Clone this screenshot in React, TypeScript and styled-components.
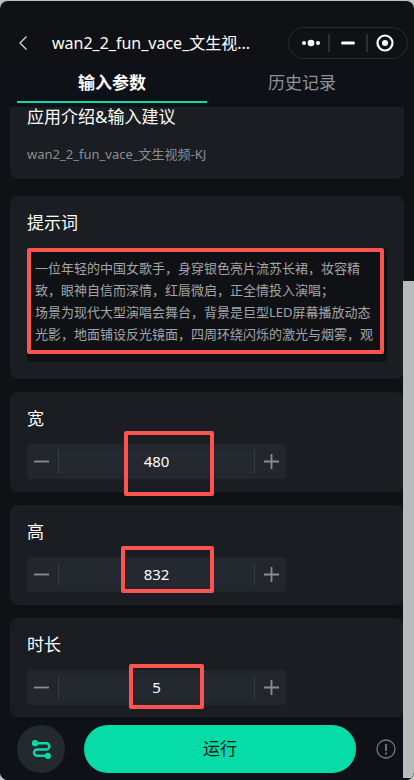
import React, { useState } from "react";
import styled, { createGlobalStyle } from "styled-components";

const GlobalStyle = createGlobalStyle`
  *, *::before, *::after { box-sizing: border-box; }
  body {
    margin: 0;
    background: #bfc3c1;
    font-family: "Noto Sans", "Noto Sans CJK SC", sans-serif;
    color: #ffffff;
  }
  button, input, textarea { font: inherit; color: inherit; }
  button { padding: 0; border: 0; background: none; cursor: pointer; }
  h1, h2, p { margin: 0; font-weight: 400; }
`;

const Frame = styled.div`
  position: relative;
  display: flex;
  flex-direction: column;
  height: 100vh;
  border-top: 1px solid #bfc3c1;
  border-radius: 8px;
  overflow: hidden;
  background: #101114;
`;

const TitleBar = styled.header`
  display: flex;
  align-items: center;
  height: 64px;
  padding: 20px 6px 0 17px;
  flex-shrink: 0;
`;

const BackButton = styled.button`
  display: flex;
  width: 35px;
  color: #d6d7d9;
`;

const Title = styled.h1`
  flex: 1;
  font-size: 16px;
  line-height: 24px;
  white-space: nowrap;
`;

const Capsule = styled.div`
  display: flex;
  align-items: center;
  width: 120px;
  height: 32px;
  padding: 0 4px;
  border: 1px solid #2b2c2f;
  border-radius: 16px;
`;

const CapsuleButton = styled.button`
  display: flex;
  flex: 1;
  align-items: center;
  justify-content: center;
  height: 18px;
  & + & { border-left: 2px solid #2d2e31; }
`;

const Tabs = styled.nav`
  display: flex;
  flex-shrink: 0;
  height: 42px;
  padding: 0 17px 4px;
  background: #0f1119;
`;

const Tab = styled.button<{ $active: boolean }>`
  flex: 1;
  font-size: 17px;
  line-height: 24px;
  font-weight: ${(p) => (p.$active ? 700 : 400)};
  color: ${(p) => (p.$active ? "#ffffff" : "#8f9398")};
  border-bottom: 2px solid ${(p) => (p.$active ? "#05dca8" : "transparent")};
`;

const Content = styled.main`
  flex: 1;
  min-height: 0;
  padding: 0 10px;
  overflow-y: auto;
  scrollbar-width: none;
`;

const Card = styled.section`
  margin-bottom: 13px;
  padding: 15px 17px 13px;
  border-radius: 8px;
  background: #1a1d21;
`;

const IntroCard = styled(Card)`
  margin-bottom: 17px;
  padding: 0 17px 14px;
  border-radius: 0 0 8px 8px;
`;

const PromptCard = styled(Card)`
  padding-bottom: 17px;
`;

const Heading = styled.h2`
  margin-bottom: 13px;
  font-size: 17px;
  line-height: 24px;
`;

const IntroHeading = styled(Heading)`
  margin-bottom: 16px;
  line-height: 20px;
`;

const Description = styled.p`
  font-size: 13px;
  line-height: 22px;
  color: #8c8e91;
`;

const PromptField = styled.div`
  position: relative;
  display: flex;
`;

const PromptInput = styled.textarea`
  width: 100%;
  height: 114px;
  padding: 9px 8px;
  border: 0;
  border-radius: 4px;
  outline: 0;
  resize: none;
  overflow: hidden;
  background: #101114;
  color: #a3a5a8;
  font-size: 13px;
  line-height: 22px;
`;

const StepperBox = styled.div`
  position: relative;
  display: flex;
  align-items: center;
  width: 259px;
  max-width: 100%;
  height: 35px;
  border-radius: 4px;
  background: #23272c;
`;

const StepButton = styled.button<{ $side: "left" | "right" }>`
  display: flex;
  align-items: center;
  justify-content: center;
  width: 31px;
  height: 35px;
  padding: ${(p) => (p.$side === "left" ? "0 2px 0 0" : "0 0 0 2px")};
  color: #8b8d91;
`;

const StepInput = styled.input`
  flex: 1;
  min-width: 0;
  height: 23px;
  padding: 0 0 2px;
  border: solid #3a3d43;
  border-width: 0 1px;
  outline: 0;
  background: #242830;
  text-align: center;
  font-size: 15px;
`;

const Highlight = styled.span<{ $top: number; $left: number; $width: number; $height: number }>`
  position: absolute;
  top: ${(p) => p.$top}px;
  left: ${(p) => p.$left}px;
  width: ${(p) => p.$width}px;
  height: ${(p) => p.$height}px;
  border: 4px solid #fd5451;
  border-radius: 2px;
  pointer-events: none;
`;

const PromptHighlight = styled.span`
  position: absolute;
  inset: 0 3px 8px 0;
  border: 4px solid #fd5451;
  border-radius: 2px;
  pointer-events: none;
`;

const Footer = styled.footer`
  display: flex;
  align-items: center;
  flex-shrink: 0;
  height: 63px;
  padding: 1px 18px 0 17px;
  background: #0f1119;
`;

const FlowButton = styled.button`
  display: flex;
  align-items: center;
  justify-content: center;
  width: 48px;
  height: 48px;
  border-radius: 50%;
  background: #232a2d;
`;

const RunButton = styled.button`
  flex: 1;
  height: 48px;
  margin: 0 20px 0 19px;
  padding-bottom: 3px;
  border-radius: 24px;
  background: #05dca8;
  color: #10191b;
  font-size: 17px;
`;

const InfoButton = styled.button`
  display: flex;
`;

const ScrollThumb = styled.div`
  position: absolute;
  top: 280px;
  right: 0;
  bottom: 2px;
  width: 11px;
  background: #b9babc;
`;

type Box = { top: number; left: number; width: number; height: number };

function Stepper({ id, label, initial, mark }: { id: string; label: string; initial: number; mark: Box }) {
  const [value, setValue] = useState(initial);
  return (
    <Card>
      <Heading><label htmlFor={id}>{label}</label></Heading>
      <StepperBox>
        <StepButton $side="left" aria-label={`${label} −`} onClick={() => setValue(value - 1)}>
          <svg width="15" height="15" viewBox="0 0 15 15" stroke="currentColor" strokeWidth="1.800"><path d="M0 7.500h15" /></svg>
        </StepButton>
        <StepInput id={id} inputMode="numeric" value={value} onChange={(e) => setValue(Number(e.target.value) || 0)} />
        <StepButton $side="right" aria-label={`${label} +`} onClick={() => setValue(value + 1)}>
          <svg width="15" height="15" viewBox="0 0 15 15" stroke="currentColor" strokeWidth="1.800"><path d="M0 7.500h15M7.500 0v15" /></svg>
        </StepButton>
        <Highlight $top={mark.top} $left={mark.left} $width={mark.width} $height={mark.height} />
      </StepperBox>
    </Card>
  );
}

const PROMPT =
  "一位年轻的中国女歌手，身穿银色亮片流苏长裙，妆容精致，眼神自信而深情，红唇微启，正全情投入演唱；\n场景为现代大型演唱会舞台，背景是巨型LED屏幕播放动态光影，地面铺设反光镜面，四周环绕闪烁的激光与烟雾，观";

export default function App() {
  const [tab, setTab] = useState(0);
  return (
    <>
      <GlobalStyle />
      <Frame>
        <TitleBar>
          <BackButton aria-label="返回">
            <svg width="12" height="16" viewBox="0 0 12 16" fill="none" stroke="currentColor" strokeWidth="1.3"><path d="M9.5 1.5 3 8l6.500 6.500" /></svg>
          </BackButton>
          <Title>wan2_2_fun_vace_文生视...</Title>
          <Capsule>
            <CapsuleButton aria-label="更多">
              <svg width="20" height="8" viewBox="0 0 20 8" fill="#fff"><circle cx="3" cy="4" r="2" /><circle cx="10" cy="4" r="3.300" /><circle cx="17" cy="4" r="2" /></svg>
            </CapsuleButton>
            <CapsuleButton aria-label="最小化">
              <svg width="14" height="4" viewBox="0 0 14 4"><rect y=".5" width="14" height="3" rx="1.500" fill="#fff" /></svg>
            </CapsuleButton>
            <CapsuleButton aria-label="关闭">
              <svg width="18" height="18" viewBox="0 0 18 18"><circle cx="9" cy="9" r="7.500" fill="none" stroke="#fff" strokeWidth="2.200" /><circle cx="9" cy="9" r="3" fill="#fff" /></svg>
            </CapsuleButton>
          </Capsule>
        </TitleBar>
        <Tabs>
          {["输入参数", "历史记录"].map((name, i) => (
            <Tab key={name} $active={tab === i} onClick={() => setTab(i)}>{name}</Tab>
          ))}
        </Tabs>
        <Content>
          <IntroCard>
            <IntroHeading>应用介绍&amp;输入建议</IntroHeading>
            <Description>wan2_2_fun_vace_文生视频-KJ</Description>
          </IntroCard>
          <PromptCard>
            <Heading><label htmlFor="prompt">提示词</label></Heading>
            <PromptField>
              <PromptInput id="prompt" defaultValue={PROMPT} spellCheck={false} />
              <PromptHighlight />
            </PromptField>
          </PromptCard>
          <Stepper id="width" label="宽" initial={480} mark={{ top: -13, left: 97, width: 90, height: 65 }} />
          <Stepper id="height" label="高" initial={832} mark={{ top: -11, left: 94, width: 93, height: 47 }} />
          <Stepper id="duration" label="时长" initial={5} mark={{ top: -6, left: 102, width: 75, height: 45 }} />
        </Content>
        <Footer>
          <FlowButton aria-label="流程">
            <svg width="20" height="20" viewBox="0 0 20 20" fill="none" stroke="#05dca8" strokeWidth="2.400">
              <path d="M4 4.200H15.200a3.100 3.100 0 0 1 0 6.300H6.200a3.100 3.100 0 0 0 0 6.300H16" />
              <circle cx="4" cy="4.200" r="3.100" fill="#05dca8" stroke="none" /><circle cx="16.800" cy="16.800" r="3.100" fill="#05dca8" stroke="none" />
            </svg>
          </FlowButton>
          <RunButton>运行</RunButton>
          <InfoButton aria-label="提示">
            <svg width="20" height="20" viewBox="0 0 20 20" fill="none" stroke="#77797d" strokeWidth="1.300"><circle cx="10" cy="10" r="9" /><path d="M10 5v7M10 13.500v2" strokeWidth="1.800" /></svg>
          </InfoButton>
        </Footer>
        <ScrollThumb />
      </Frame>
    </>
  );
}
